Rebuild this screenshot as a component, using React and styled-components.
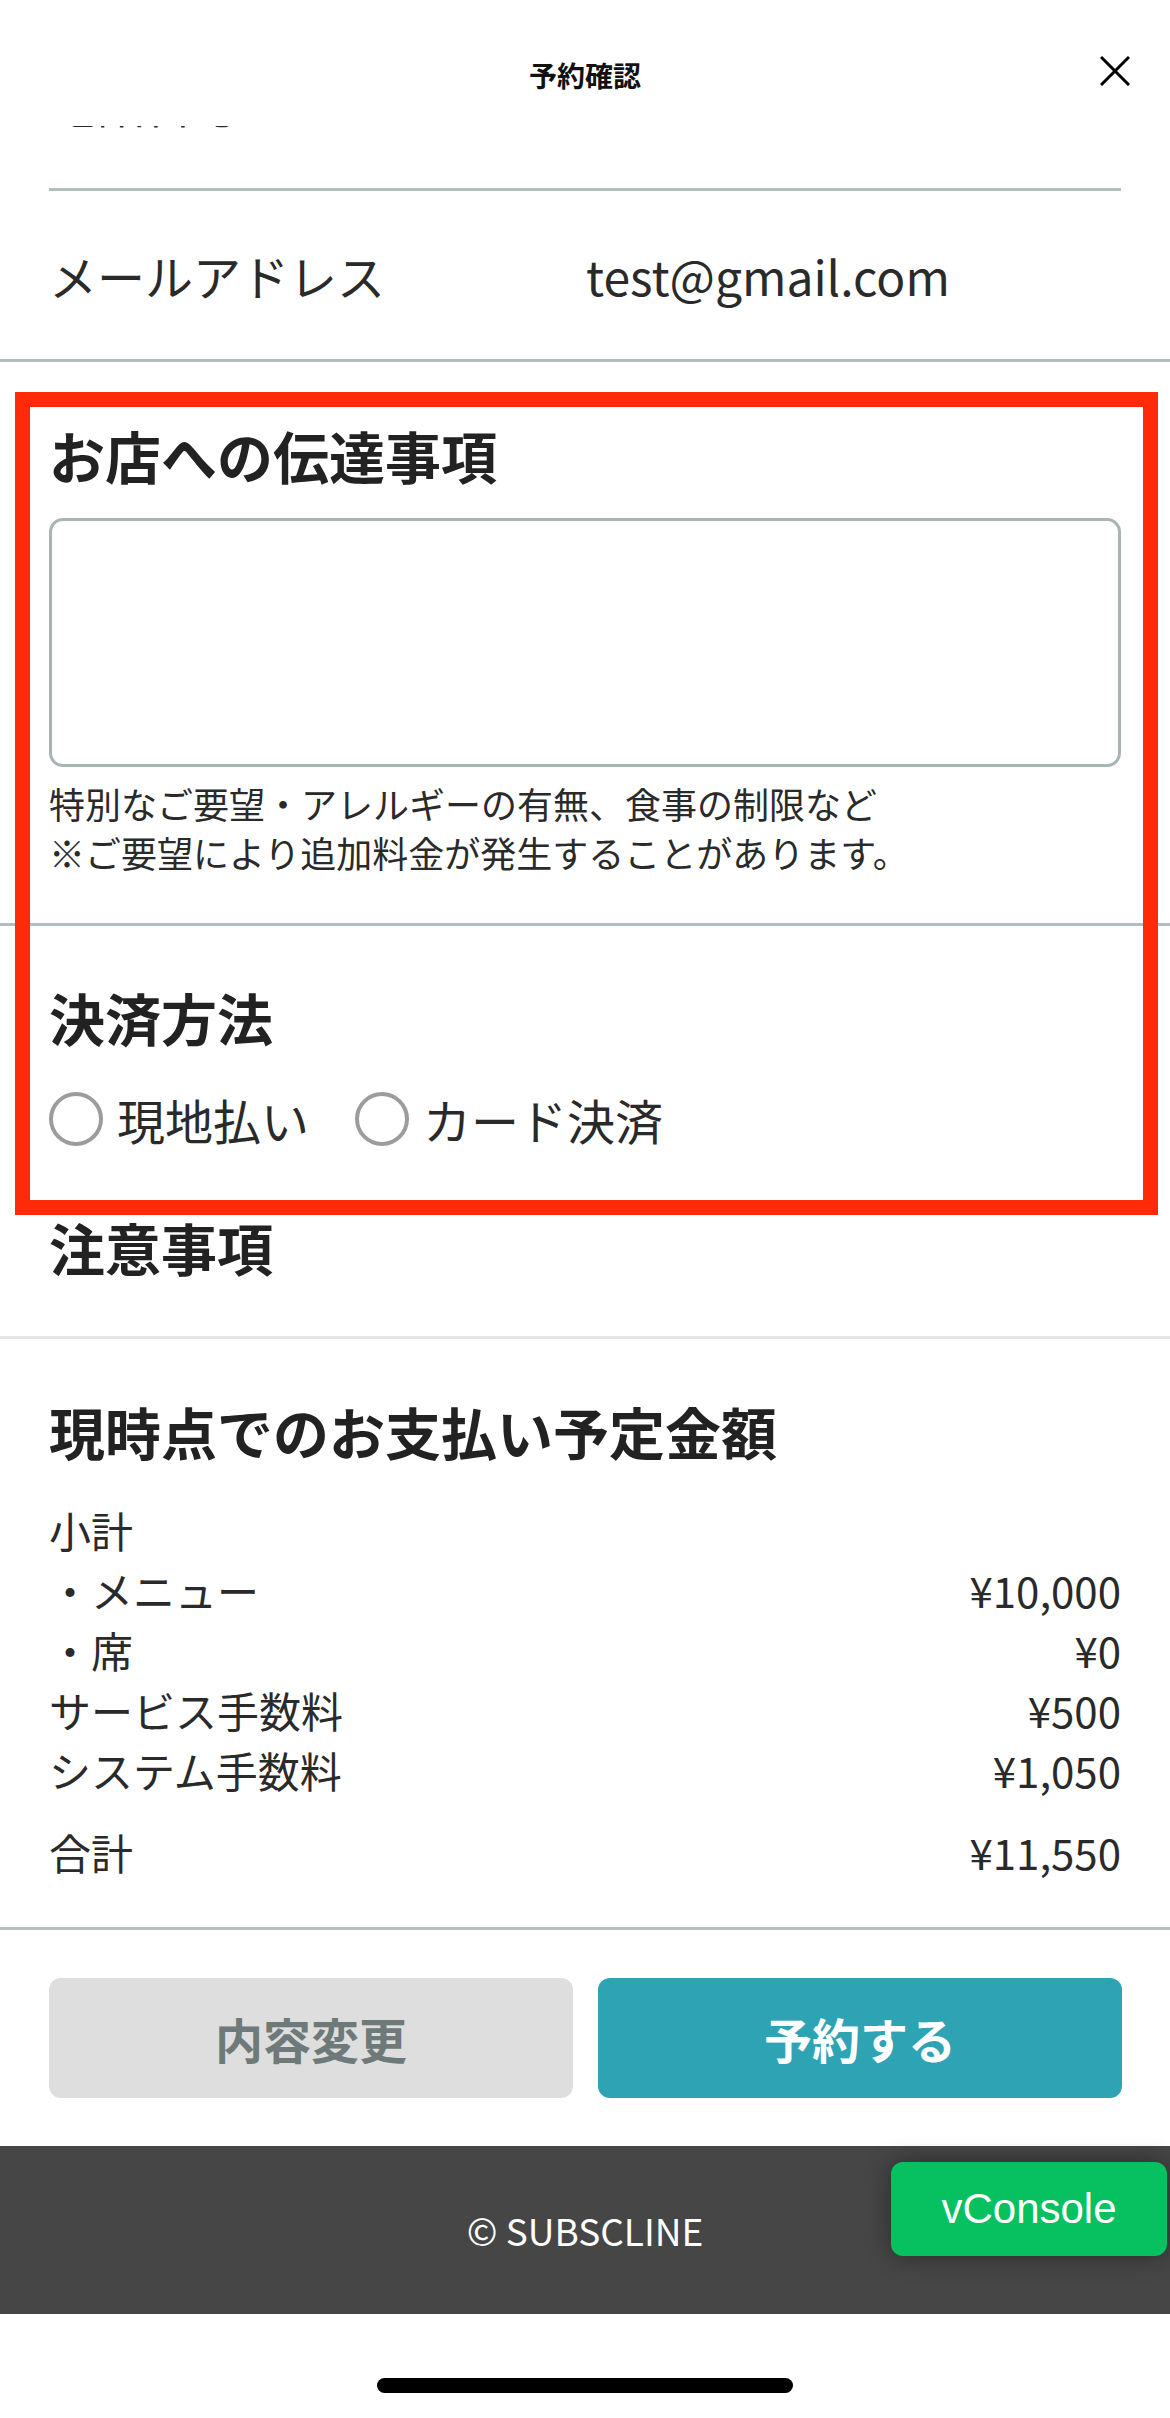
import React from 'react'
import styled, { createGlobalStyle } from 'styled-components'

const GlobalStyle = createGlobalStyle`
  html, body {
    margin: 0;
    padding: 0;
    background: #ffffff;
  }
  body {
    font-family: "Noto Sans CJK JP", "Noto Sans", sans-serif;
    color: #2a2a2a;
  }
  * {
    box-sizing: border-box;
  }
`

const Page = styled.div`
  position: relative;
  width: 1170px;
  min-height: 2418px;
  display: flex;
  flex-direction: column;
  background: #ffffff;
  overflow: hidden;
`

const Header = styled.header`
  height: 126px;
  padding-top: 24px;
  display: grid;
  grid-template-columns: 1fr auto 1fr;
  align-items: center;
  background: #ffffff;
`

const HeaderTitle = styled.h1`
  grid-column: 2;
  margin: 0;
  font-size: 28px;
  font-weight: 700;
  color: #111;
  line-height: 1;
`

const CloseButton = styled.button`
  grid-column: 3;
  justify-self: end;
  margin-right: 40px;
  margin-top: -8px;
  width: 30px;
  height: 30px;
  padding: 0;
  border: none;
  background: transparent;
  display: flex;
  align-items: center;
  justify-content: center;
`

/* row scrolled up under the header: only the bottom of its label shows */
const ClippedRow = styled.div`
  height: 65px;
  overflow: hidden;
  margin: 0 49px;
  border-bottom: 3px solid #b2bdbd;
`

const ClippedLabel = styled.div`
  margin-top: -48px;
  font-size: 48px;
  line-height: 48px;
  color: #2a2a2a;
`

const DetailRow = styled.div`
  height: 171px;
  padding: 0 49px;
  display: grid;
  grid-template-columns: 537px 1fr;
  align-items: center;
  border-bottom: 3px solid #b2bdbd;
  font-size: 48px;
  color: #2a2a2a;
`

const Section = styled.section`
  padding: ${p => p.$pt}px 49px ${p => p.$pb}px;
  border-bottom: ${p => (p.$line ? `3px solid ${p.$line}` : 'none')};
`

const SectionTitle = styled.h2`
  margin: 0;
  font-size: 56px;
  line-height: 76px;
  font-weight: 700;
  color: #222;
`

const MemoBox = styled.textarea`
  display: block;
  width: 100%;
  height: 249px;
  margin-top: 25px;
  border: 3px solid #a9b4b4;
  border-radius: 14px;
  resize: none;
  background: #fff;
  font-family: inherit;
  font-size: 42px;
`

const HelpText = styled.p`
  margin: 12px 0 0;
  font-size: 36px;
  line-height: 49px;
  color: #2a2a2a;
`

const RadioGroup = styled.div`
  display: flex;
  align-items: center;
  gap: 46px;
  margin-top: 37px;
`

const RadioOption = styled.label`
  display: flex;
  align-items: center;
  gap: 14px;
  font-size: 48px;
  line-height: 54px;
  color: #2a2a2a;
`

const RadioCircle = styled.span`
  width: 54px;
  height: 54px;
  border-radius: 50%;
  border: 4px solid #9c9c9c;
  background: #fff;
  flex-shrink: 0;
`

const SummaryList = styled.div`
  margin-top: 31px;
  display: flex;
  flex-direction: column;
`

const SummaryRow = styled.div`
  display: flex;
  justify-content: space-between;
  font-size: 42px;
  line-height: 60px;
  color: #2a2a2a;
  margin-top: ${p => (p.$total ? '22px' : '0')};
`

const ButtonBar = styled.div`
  display: grid;
  grid-template-columns: 1fr 1fr;
  gap: 25px;
  padding: 48px 48px 48px 49px;
`

const ActionButton = styled.button`
  height: 120px;
  border: none;
  border-radius: 12px;
  font-family: inherit;
  font-size: 48px;
  font-weight: 700;
  background: ${p => (p.$primary ? '#2ea3b3' : '#dedede')};
  color: ${p => (p.$primary ? '#ffffff' : '#6e7a7a')};
`

const Footer = styled.footer`
  height: 168px;
  background: #464646;
  display: flex;
  align-items: center;
  justify-content: center;
  color: #ffffff;
  font-size: 37px;
`

const BottomArea = styled.div`
  flex: 1;
  display: flex;
  justify-content: center;
  padding-top: 64px;
`

const HomeIndicator = styled.div`
  width: 416px;
  height: 15px;
  border-radius: 8px;
  background: #000;
`

const Highlight = styled.div`
  position: absolute;
  left: 15px;
  top: 392px;
  width: 1143px;
  height: 823px;
  border: 15px solid #fe2a08;
  pointer-events: none;
`

const ConsoleButton = styled.div`
  position: absolute;
  right: 3px;
  top: 2162px;
  width: 276px;
  height: 94px;
  border-radius: 12px;
  background: #07c160;
  box-shadow: 0 0 24px rgba(0, 0, 0, 0.4);
  color: #fff;
  font-family: "Liberation Sans", Arial, sans-serif;
  font-size: 42px;
  display: flex;
  align-items: center;
  justify-content: center;
`

const summary = [
  { label: '小計', value: '' },
  { label: '・メニュー', value: '¥10,000' },
  { label: '・席', value: '¥0' },
  { label: 'サービス手数料', value: '¥500' },
  { label: 'システム手数料', value: '¥1,050' },
]

const App = () => {
  return (
    <Page>
      <GlobalStyle />
      <Header>
        <HeaderTitle>予約確認</HeaderTitle>
        <CloseButton aria-label="close">
          <svg width="30" height="30" viewBox="0 0 30 30">
            <path d="M1 1 L29 29 M29 1 L1 29" stroke="#000" strokeWidth="3" />
          </svg>
        </CloseButton>
      </Header>

      <ClippedRow>
        <ClippedLabel>電話番号</ClippedLabel>
      </ClippedRow>

      <DetailRow>
        <span>メールアドレス</span>
        <span>test@gmail.com</span>
      </DetailRow>

      <Section $pt={55} $pb={46} $line="#b2bdbd">
        <SectionTitle>お店への伝達事項</SectionTitle>
        <MemoBox />
        <HelpText>
          特別なご要望・アレルギーの有無、食事の制限など
          <br />
          ※ご要望により追加料金が発生することがあります。
        </HelpText>
      </Section>

      <Section $pt={53} $pb={0}>
        <SectionTitle>決済方法</SectionTitle>
        <RadioGroup>
          <RadioOption>
            <RadioCircle />
            現地払い
          </RadioOption>
          <RadioOption>
            <RadioCircle />
            カード決済
          </RadioOption>
        </RadioGroup>
      </Section>

      <Section $pt={63} $pb={51} $line="#e6e6e6">
        <SectionTitle>注意事項</SectionTitle>
      </Section>

      <Section $pt={54} $pb={45} $line="#b4c2be">
        <SectionTitle>現時点でのお支払い予定金額</SectionTitle>
        <SummaryList>
          {summary.map(row => (
            <SummaryRow key={row.label}>
              <span>{row.label}</span>
              <span>{row.value}</span>
            </SummaryRow>
          ))}
          <SummaryRow $total>
            <span>合計</span>
            <span>¥11,550</span>
          </SummaryRow>
        </SummaryList>
      </Section>

      <ButtonBar>
        <ActionButton>内容変更</ActionButton>
        <ActionButton $primary>予約する</ActionButton>
      </ButtonBar>

      <Footer>© SUBSCLINE</Footer>

      <BottomArea>
        <HomeIndicator />
      </BottomArea>

      <Highlight />
      <ConsoleButton>vConsole</ConsoleButton>
    </Page>
  )
}

export default App
